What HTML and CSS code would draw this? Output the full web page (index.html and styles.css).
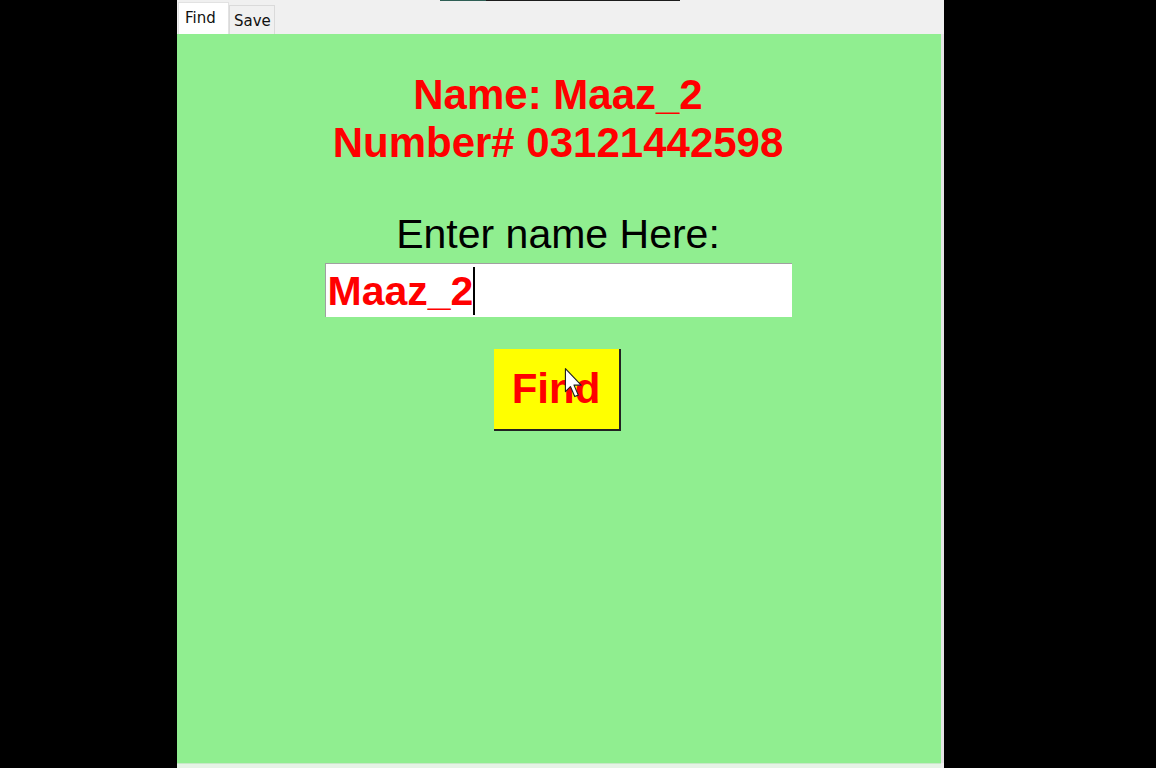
FILE: index.html
```html
<!DOCTYPE html>
<html>
<head>
<meta charset="utf-8">
<link rel="stylesheet" href="styles.css">
</head>
<body>
<div class="screen">
  <div class="left-black"></div>
  <div class="window">
    <div class="tabbar">
      <div class="topline"><span class="topline-teal"></span></div>
      <div class="tab tab-active">Find</div>
      <div class="tab">Save</div>
    </div>
    <div class="body-row">
      <div class="panel">
        <div class="result">
          <div>Name: Maaz_2</div>
          <div>Number# 03121442598</div>
        </div>
        <div class="prompt">Enter name Here:</div>
        <div class="input"><span class="input-text">Maaz_2</span><span class="caret"></span></div>
        <div class="btn-wrap">
          <div class="btn">Find</div>
          <svg class="cursor" width="20" height="32" viewBox="0 0 14 22"><path d="M1 1 L1 17 L4.5 13.5 L7.5 20.5 L10 19.5 L7 12.5 L12 12.5 Z" fill="#fff" stroke="#222" stroke-width="0.8" stroke-linejoin="round"/></svg>
        </div>
      </div>
      <div class="edge"></div>
    </div>
    <div class="bottom"></div>
  </div>
</div>
</body>
</html>
```
FILE: styles.css
```css
html, body {
  margin: 0;
  padding: 0;
  background: #000;
  width: 1156px;
  height: 768px;
  overflow: hidden;
}
.screen {
  display: flex;
  height: 768px;
}
.left-black {
  width: 177px;
  flex: none;
}
.window {
  width: 767px;
  flex: none;
  display: flex;
  flex-direction: column;
  background: #f0f0f0;
}
.tabbar {
  position: relative;
  height: 34px;
  flex: none;
  display: flex;
  align-items: flex-end;
  padding-left: 1px;
  background: #f0f0f0;
  font-family: "DejaVu Sans", "Noto Sans", sans-serif;
}
.topline {
  position: absolute;
  left: 263px;
  top: 0;
  width: 240px;
  height: 1px;
  background: #1c1c1c;
}
.topline-teal {
  display: block;
  width: 46px;
  height: 1px;
  background: #2f5f55;
}
.tab {
  height: 29px;
  padding: 0 4px;
  font-size: 15px;
  line-height: 31px;
  color: #111;
  border: 1px solid #dadada;
  border-bottom: none;
  background: #f0f0f0;
  box-sizing: border-box;
  width: 46px;
}
.tab-active {
  height: 32px;
  width: 51px;
  background: #fff;
  border-color: #e2e2e2;
  line-height: 30px;
  padding-left: 6px;
}
.body-row {
  display: flex;
  flex: none;
  height: 729px;
}
.panel {
  width: 764px;
  flex: none;
  background: #90ee90;
  display: flex;
  flex-direction: column;
  align-items: center;
  font-family: "Liberation Sans", Arial, sans-serif;
}
.edge {
  flex: 1;
  background: #e4e4e4;
}
.bottom {
  flex: 1;
  background: #e6f3e6;
  margin-right: 3px;
  border-top: 1px solid #c8e8c8;
}
.result {
  margin-top: 37px;
  margin-left: -2px;
  color: #f00;
  font-weight: bold;
  font-size: 42px;
  line-height: 48px;
  text-align: center;
}
.prompt {
  margin-top: 43px;
  margin-left: -2px;
  font-size: 41px;
  line-height: 48px;
  color: #000;
}
.input {
  margin-top: 5px;
  margin-left: -2px;
  width: 467px;
  height: 54px;
  box-sizing: border-box;
  background: #fff;
  border-top: 1px solid #a0a0a0;
  border-left: 1px solid #a0a0a0;
  display: flex;
  align-items: center;
  padding-left: 2px;
}
.input-text {
  color: #f00;
  font-weight: bold;
  font-size: 41px;
  line-height: 48px;
}
.caret {
  width: 2px;
  height: 48px;
  background: #000;
  margin-left: 0;
}
.btn-wrap {
  position: relative;
  margin-top: 32px;
  margin-left: -4px;
}
.btn {
  width: 127px;
  height: 82px;
  box-sizing: border-box;
  background: #ffff00;
  border-right: 2px solid #222;
  border-bottom: 2px solid #222;
  color: #f00;
  font-weight: bold;
  font-size: 42px;
  line-height: 80px;
  text-align: center;
}
.cursor {
  position: absolute;
  left: 70px;
  top: 18px;
}
```
